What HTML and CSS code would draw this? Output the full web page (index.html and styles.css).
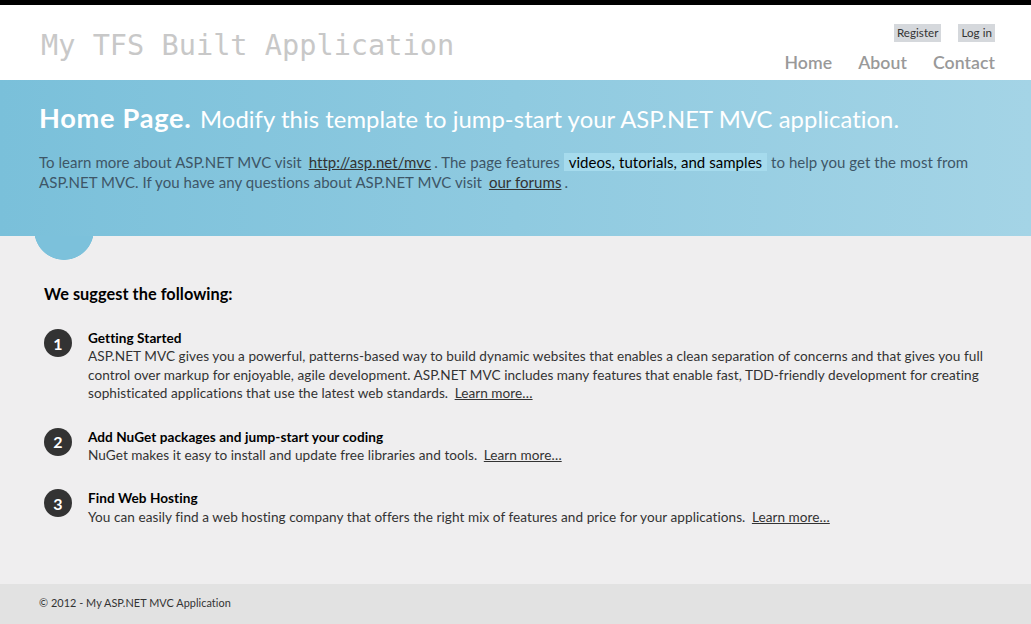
FILE: index.html
```html
<!DOCTYPE html>
<html lang="en">
<head>
<meta charset="utf-8">
<title>Home Page - My ASP.NET MVC Application</title>
<link rel="stylesheet" href="styles.css">
</head>
<body>
<header class="site-header">
  <div class="header-inner">
    <p class="site-title"><a href="#">My TFS Built Application</a></p>
    <div class="header-right">
      <ul class="login">
        <li><a href="#">Register</a></li>
        <li><a href="#">Log in</a></li>
      </ul>
      <nav>
        <ul class="menu">
          <li><a href="#">Home</a></li>
          <li><a href="#">About</a></li>
          <li><a href="#">Contact</a></li>
        </ul>
      </nav>
    </div>
  </div>
</header>
<section class="featured">
  <h1 class="hero-title"><span class="hero-main">Home Page.</span> <span class="hero-sub">Modify this template to jump-start your ASP.NET MVC application.</span></h1>
  <p>To learn more about ASP.NET MVC visit <a href="#">http://asp.net/mvc</a>. The page features <mark>videos, tutorials, and samples</mark> to help you get the most from ASP.NET MVC. If you have any questions about ASP.NET MVC visit <a href="#">our forums</a>.</p>
</section>
<main class="main">
  <h3 class="suggest">We suggest the following:</h3>
  <ol class="round">
    <li>
      <span class="num">1</span>
      <div class="item">
        <h5>Getting Started</h5>
        <p>ASP.NET MVC gives you a powerful, patterns-based way to build dynamic websites that enables a clean separation of concerns and that gives you full control over markup for enjoyable, agile development. ASP.NET MVC includes many features that enable fast, TDD-friendly development for creating sophisticated applications that use the latest web standards. <a href="#">Learn more…</a></p>
      </div>
    </li>
    <li>
      <span class="num">2</span>
      <div class="item">
        <h5>Add NuGet packages and jump-start your coding</h5>
        <p>NuGet makes it easy to install and update free libraries and tools. <a href="#">Learn more…</a></p>
      </div>
    </li>
    <li>
      <span class="num">3</span>
      <div class="item">
        <h5>Find Web Hosting</h5>
        <p>You can easily find a web hosting company that offers the right mix of features and price for your applications. <a href="#">Learn more…</a></p>
      </div>
    </li>
  </ol>
</main>
<footer class="footer">
  <p>&copy; 2012 - My ASP.NET MVC Application</p>
</footer>
</body>
</html>
```

FILE: styles.css
```css
* { box-sizing: border-box; }

html { background: #e2e2e2; }

body {
  margin: 0;
  border-top: 5px solid #000;
  background: #efeeef;
  color: #333;
  font-family: "Segoe UI", Lato, "Liberation Sans", sans-serif;
  font-size: 13.6px;
  letter-spacing: 0.05px;
}

a {
  color: #333;
  padding: 0 3px;
  text-decoration: underline;
}

/* header */
.site-header {
  background: #fff;
  height: 75px;
}
.header-inner {
  display: flex;
  justify-content: space-between;
  height: 100%;
  padding: 0 36px;
}
.site-title {
  margin: 0;
  padding-top: 26px;
  font-family: "DejaVu Sans Mono", monospace;
  font-size: 28.6px;
  line-height: 28.6px;
  letter-spacing: 0;
}
.site-title a {
  color: #c8c8c8;
  text-decoration: none;
  padding: 0 0 0 5px;
}
.header-right {
  display: flex;
  flex-direction: column;
  align-items: flex-end;
  padding-top: 19px;
}
.login {
  list-style: none;
  margin: 0;
  padding: 0;
  display: flex;
  gap: 17px;
  font-size: 11.56px;
}
.login a {
  display: block;
  background: #d5d8dc;
  padding: 2px 3px;
  line-height: 14px;
  text-decoration: none;
}
.menu {
  list-style: none;
  margin: 10px 0 0;
  padding: 0;
  display: flex;
  gap: 26px;
  font-size: 17.68px;
  font-weight: 600;
  line-height: 22px;
}
.menu a {
  color: #999;
  text-decoration: none;
  padding: 0;
}

/* featured */
.featured {
  height: 156px;
  padding: 21px 39px 0;
  background: linear-gradient(to right, #7ac0da, #a4d4e6);
  color: #3e5667;
}
.hero-title {
  margin: 0 0 16px;
  color: #fff;
  font-size: 27.2px;
  font-weight: 700;
  line-height: 34px;
}
.hero-main {
  letter-spacing: 0.7px;
}
.hero-sub {
  font-size: 23.8px;
  font-weight: 400;
  margin-left: 2px;
  letter-spacing: 0.08px;
}
.featured p {
  margin: 0;
  font-size: 15px;
  line-height: 20px;
}
.featured mark {
  background: #a6dbed;
  color: #000;
  padding: 0 5px;
}

/* main */
.main {
  padding: 47px 36px 58px 44px;
  background: radial-gradient(circle at 64px -6px, #7cc1db 29.5px, #efeeef 30.2px);
}
.suggest {
  margin: 0;
  color: #000;
  font-size: 16.3px;
  font-weight: 700;
  line-height: 22px;
}
.round {
  list-style: none;
  margin: 24px 0 0;
  padding: 0;
  display: flex;
  flex-direction: column;
  gap: 25px;
}
.round li {
  display: flex;
  align-items: flex-start;
}
.num {
  flex: none;
  width: 28px;
  height: 28px;
  border-radius: 50%;
  background: #333;
  color: #fff;
  font-size: 16px;
  font-weight: 700;
  display: flex;
  align-items: center;
  justify-content: center;
}
.item {
  margin-left: 16px;
  line-height: 18.4px;
}
.item h5 {
  margin: 0;
  color: #000;
  font-size: 13.6px;
  font-weight: 700;
}
.item p {
  margin: 0;
}

/* footer */
.footer {
  background: #e2e2e2;
  padding: 12px 39px 30px;
  font-size: 10.88px;
  line-height: 14px;
}
.footer p { margin: 0; }
```
